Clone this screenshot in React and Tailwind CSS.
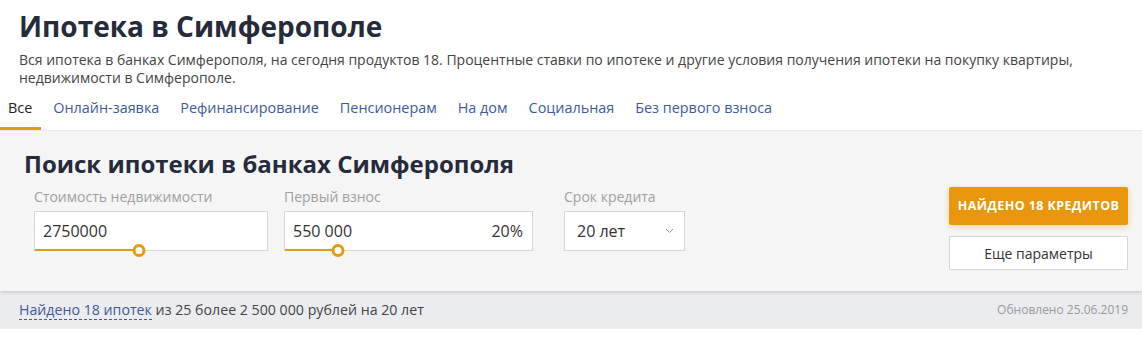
import React from "react";

const tabs = ["Все", "Онлайн-заявка", "Рефинансирование", "Пенсионерам", "На дом", "Социальная", "Без первого взноса"];

function Slider({ width }) {
  return (
    <>
      <div className="absolute left-0 bottom-[-1px] h-[2px] bg-[#e39b0f]" style={{ width }} />
      <div
        className="absolute bottom-[-7px] w-[13px] h-[13px] rounded-full border-[3px] border-[#e39b0f] bg-white -translate-x-1/2"
        style={{ left: width }}
      />
    </>
  );
}

export default function App() {
  return (
    <div className="w-[1142px] h-[346px] bg-white font-['Open_Sans',sans-serif] text-[#333]">
      <div className="pl-[19px] pt-[8px]">
        <h1 className="text-[28px] leading-[36px] font-bold text-[#252b3b]">Ипотека в Симферополе</h1>
        <p className="mt-[7px] text-[14px] leading-[18px] text-[#444] pr-[60px]">
          Вся ипотека в банках Симферополя, на сегодня продуктов 18. Процентные ставки по ипотеке и другие условия получения ипотеки на покупку квартиры, недвижимости в Симферополе.
        </p>
      </div>
      <div className="flex mt-[6px] gap-[3px]">
        {tabs.map((t, i) => (
          <div
            key={t}
            className={
              "h-[37px] text-[14.4px] leading-[30px] border-b-[3px] " +
              (i === 0 ? "pl-[8px] pr-[9px] text-[#222] border-[#e39b0f]" : "px-[9px] text-[#3e5b98] border-transparent")
            }
          >
            {t}
          </div>
        ))}
      </div>
      <div className="bg-[#f5f5f6] border-t border-[#e8e8e8] h-[161px] shadow-[0_2px_3px_rgba(0,0,0,0.12)] relative flex">
        <div className="pl-[24px] pt-[18px]">
          <h2 className="text-[24px] leading-[30px] font-bold text-[#252b3b]">Поиск ипотеки в банках Симферополя</h2>
          <div className="flex mt-[8px] pl-[10px]">
            <div className="w-[234px]">
              <div className="text-[14px] leading-[20px] text-[#a0a0a0]">Стоимость недвижимости</div>
              <div className="relative mt-[4px] h-[40px] bg-white border border-[#d6d6d6] flex items-center pl-[8px] text-[16px] text-[#333]">
                2750000
                <Slider width={104} />
              </div>
            </div>
            <div className="w-[249px] ml-[16px]">
              <div className="text-[14px] leading-[20px] text-[#a0a0a0]">Первый взнос</div>
              <div className="relative mt-[4px] h-[40px] bg-white border border-[#d6d6d6] flex items-center justify-between pl-[8px] pr-[9px] text-[16px] text-[#333]">
                <span>550 000</span>
                <span>20%</span>
                <Slider width={53} />
              </div>
            </div>
            <div className="w-[121px] ml-[31px]">
              <div className="text-[14px] leading-[20px] text-[#a0a0a0]">Срок кредита</div>
              <div className="relative mt-[4px] h-[40px] bg-white border border-[#d6d6d6] flex items-center justify-between pl-[12px] pr-[10px] text-[16px] text-[#333]">
                <span>20 лет</span>
                <svg width="9" height="6" viewBox="0 0 9 6" fill="none">
                  <path d="M1 1l3.5 3.5L8 1" stroke="#9a9a9a" strokeWidth="1" />
                </svg>
              </div>
            </div>
          </div>
        </div>
        <div className="ml-auto mr-[14px] pt-[56px] w-[179px] flex flex-col gap-[11px]">
          <div className="h-[38px] rounded-[2px] bg-[#e8960c] shadow-[0_2px_6px_rgba(232,150,12,0.35)] flex items-center justify-center text-white text-[12.5px] font-bold tracking-[0.4px]">
            НАЙДЕНО 18 КРЕДИТОВ
          </div>
          <div className="h-[34px] bg-white border border-[#d6d6d6] rounded-[1px] flex items-center justify-center text-[14px] text-[#333]">
            Еще параметры
          </div>
        </div>
      </div>
      <div className="bg-[#ebecf0] h-[38px] flex items-center justify-between pl-[19px] pr-[14px]">
        <div className="text-[14.2px] text-[#444]">
          <span className="text-[#3e5b98] border-b border-dashed border-[#3e5b98]">Найдено 18 ипотек</span> из 25 более 2 500 000 рублей на 20 лет
        </div>
        <div className="text-[12px] text-[#9a9a9a]">Обновлено 25.06.2019</div>
      </div>
    </div>
  );
}
